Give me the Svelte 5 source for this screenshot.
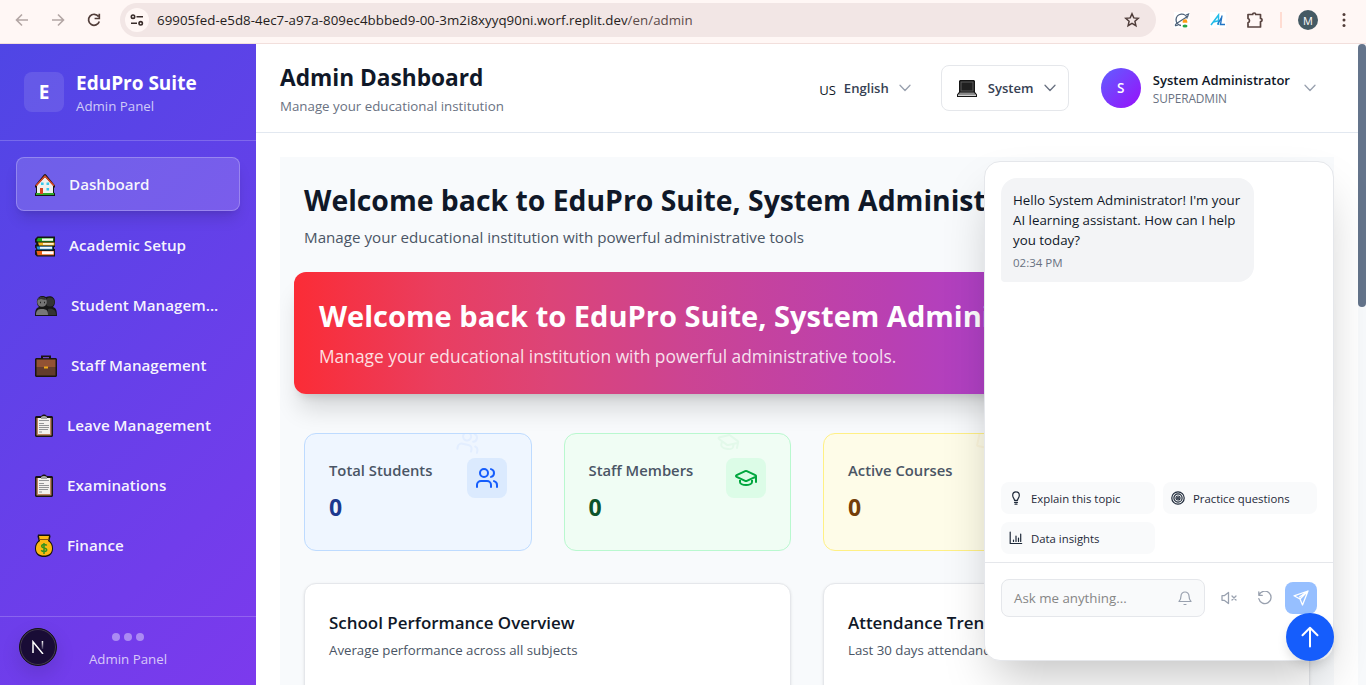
<script>
  const nav = [
    { label: 'Dashboard', icon: 'house', w: 22, active: true },
    { label: 'Academic Setup', icon: 'books', w: 22 },
    { label: 'Student Managem...', icon: 'people', w: 24 },
    { label: 'Staff Management', icon: 'case', w: 24 },
    { label: 'Leave Management', icon: 'clip', w: 20 },
    { label: 'Examinations', icon: 'clip', w: 20 },
    { label: 'Finance', icon: 'money', w: 20 }
  ];
  const stats = [
    { label: 'Total Students', value: '0', tone: 'blue', icon: 'users' },
    { label: 'Staff Members', value: '0', tone: 'green', icon: 'cap' },
    { label: 'Active Courses', value: '0', tone: 'yellow', icon: 'book' }
  ];
  const charts = [
    { title: 'School Performance Overview', sub: 'Average performance across all subjects' },
    { title: 'Attendance Trends', sub: 'Last 30 days attendance' }
  ];
  const chips = [
    { label: 'Explain this topic', icon: 'bulb' },
    { label: 'Practice questions', icon: 'target' },
    { label: 'Data insights', icon: 'bars' }
  ];
</script>

{#snippet chevron(color)}
  <svg class="chev" width="12" height="8" viewBox="0 0 12 8" fill="none" stroke={color} stroke-width="1.3" stroke-linecap="round" stroke-linejoin="round"><path d="M1 1.2 6 6.5 11 1.2" /></svg>
{/snippet}

{#snippet line(name)}
  <svg viewBox="0 0 24 24" width="24" height="24" fill="none" stroke="currentColor" stroke-width="2" stroke-linecap="round" stroke-linejoin="round">
    {#if name === 'users'}
      <path d="M16 21v-2a4 4 0 0 0-4-4H6a4 4 0 0 0-4 4v2" /><circle cx="9" cy="7" r="4" /><path d="M22 21v-2a4 4 0 0 0-3-3.87M16 3.13a4 4 0 0 1 0 7.75" />
    {:else if name === 'cap'}
      <path d="M21.42 10.922a1 1 0 0 0-.019-1.838L12.83 5.18a2 2 0 0 0-1.66 0L2.6 9.08a1 1 0 0 0 0 1.832l8.57 3.908a2 2 0 0 0 1.66 0zM22 10v6M6 12.5V16a6 3 0 0 0 12 0v-3.5" />
    {:else}
      <path d="M12 7v14M3 18a1 1 0 0 1-1-1V4a1 1 0 0 1 1-1h5a4 4 0 0 1 4 4 4 4 0 0 1 4-4h5a1 1 0 0 1 1 1v13a1 1 0 0 1-1 1h-6a3 3 0 0 0-3 3 3 3 0 0 0-3-3z" />
    {/if}
  </svg>
{/snippet}

{#snippet emoji(name, w)}
  <svg class="emoji" width={w} height="24" viewBox="0 0 {w} 24">
    {#if name === 'house'}
      <path d="M1 12.500 10 1.500q1-1 2 0L21 12.500v2h-1v5l1 1v2.500H1v-2.500l1-1v-5H1z" fill="#161616" />
      <path d="M3 12.500 11 4l8 8.500V20.500H3z" fill="#f1f0ee" /><path d="M2 12.800 11 3l9 9.800" fill="none" stroke="#de4b28" stroke-width="1.500" />
      <path d="M2 20h18v2H2z" fill="#2faa2a" /><path d="M6 15h3v6H6z" fill="#d8431f" /><path d="M7 9.500h2.600v2.600H7zM12.500 9.500h2.600v2.600h-2.600zM12.500 15h2.600v2.600h-2.600z" fill="#39c8ec" />
    {:else if name === 'books'}
      <path d="M3.500 2.500H21V13h-1v2h1v7.500H3l-2-2v-4l1.500-1.500L1 13.500v-2.500L2.500 10 1 8V5z" fill="#161616" />
      <path d="M4 4h15.500v3.500H3.500l-1-1z" fill="#20a820" /><path d="M8 4.500h11v2.300H8z" fill="#f7f7f3" />
      <path d="M4 8.500h16.500v3H5z" fill="#f2b31a" /><path d="M9 9h10.500v1.800H9z" fill="#fff4ce" />
      <path d="M2.500 12.500h16v3h-15z" fill="#2794dd" /><path d="M6 12.800h12v2H6z" fill="#eef8ff" />
      <path d="M2.500 17h17.500v4.200H3.500z" fill="#e95f16" /><path d="M8 17.300h11.500v3H8z" fill="#fff" />
    {:else if name === 'people'}
      <path d="M8 2c2 0 3 .5 4 1 4-2 9-.5 9 5 0 2-1 4-2 5 3 1 4 3 4 9H1c0-6 1-8 4-9-4-4-2-11 3-11z" fill="#171717" />
      <circle cx="16" cy="8" r="4.500" fill="#343434" /><path d="M14 15c5-1 8 1 8 6h-8z" fill="#343434" />
      <circle cx="8" cy="8" r="4.800" fill="#747474" /><path d="M4 6c1-4 7-4 8 0-3 0-4-1-5-1z" fill="#343434" /><path d="M2 21c0-5 2-6 6-6 5 0 6 2 6 6z" fill="#777" />
      <path d="M6 8.500h1M10 8.500h1" stroke="#222" stroke-width="1.400" />
    {:else if name === 'case'}
      <path d="M7 1.500h10V4h5l1 1v17l-1 1H2l-1-1V5l1-1h5z" fill="#1b1411" /><path d="M9 3h6v1.200H9z" fill="#6e46bb" />
      <path d="M2.500 5.500h19v7.500h-19z" fill="#925234" /><path d="M2.500 13h19v8.500h-19z" fill="#623c2d" /><path d="M10 12.500h4v2h-4z" fill="#efa91a" />
    {:else if name === 'clip'}
      <path d="M2 2h5l2-1.500h2L13 2h5l1 1v19l-1 1H2l-1-1V3z" fill="#191514" /><path d="M2.500 4h15v17.500h-15z" fill="#bc8561" /><path d="M4 4h12v16H4z" fill="#f3f1ee" /><path d="M7 3l2-1h2l2 1v2H7z" fill="#a4a6a3" />
      <path d="M5 6.500h10M5 9.500h5M5 11.500h10M5 13.500h10M5 15.500h9M5 18h3" stroke="#898a8b" stroke-width=".9" />
    {:else if name === 'money'}
      <path d="M4 0.500h12l.5 2-1 4c2 2 3.500 4 3.500 8 0 6-4 8.500-9 8.500s-9-2.500-9-8.500c0-4 1.500-6 3.500-8l-1-4z" fill="#17130c" /><path d="M5 2h10l-1 5c3 2 4 4 4 7.500 0 4.500-3 7-8 7s-8-2.500-8-7C2 11 3 9 6 7z" fill="#fcb813" />
      <path d="M5.500 5.500h9" stroke="#86510b" /><path d="M12.700 11.500c-1-1.500-5-1.500-5 .700s5 1.300 5 3.500-4 2.300-5.500.500M10 9v11" fill="none" stroke="#35911e" stroke-width="1.500" />
    {/if}
  </svg>
{/snippet}

<div class="screen">
  <div class="browser">
    <div class="navs">
      <svg width="14" height="14" viewBox="0 0 14 14" fill="none" stroke="#b3a6a4" stroke-width="1.600"><path d="M13 7H2M7 1.500 1.500 7 7 12.500" /></svg>
      <svg width="14" height="14" viewBox="0 0 14 14" fill="none" stroke="#b3a6a4" stroke-width="1.600"><path d="M1 7h11M7 1.500 12.500 7 7 12.500" /></svg>
      <svg width="14" height="14" viewBox="0 0 14 14" fill="none" stroke="#523e3a" stroke-width="1.700"><path d="M11.500 3.500A5.500 5.500 0 1 0 12.300 8.500M12.300.8v4.700H7.600" /></svg>
    </div>
    <div class="address">
      <span class="tune"><svg width="14" height="12" viewBox="0 0 14 12" fill="none" stroke="#392c2a" stroke-width="1.600"><circle cx="3" cy="2.700" r="1.700" /><circle cx="10.700" cy="9.300" r="1.700" /><path d="M6.500 2.700H13M1 9.300h6" /></svg></span>
      <span class="url">69905fed-e5d8-4ec7-a97a-809ec4bbbed9-00-3m2i8xyyq90ni.worf.replit.dev<i>/en/admin</i></span>
      <svg class="star" width="16" height="16" viewBox="0 0 16 16" fill="none" stroke="#4e3c39" stroke-width="1.500"><path d="m8 1.800 1.800 4.100 4.500.4-3.400 3 1 4.400L8 11.400l-3.900 2.300 1-4.400-3.400-3 4.500-.4z" /></svg>
    </div>
    <div class="exts">
      <svg width="16" height="16" viewBox="0 0 16 16"><path d="M0 0h16v16H0z" fill="#fff" /><path d="M7 13.500A5.700 5.700 0 1 1 13.300 6.500" fill="none" stroke="#4c6078" stroke-width="1.300" /><path d="M2.500 11.500C.5 13.500 1 14.500 4 13M2.500 11.500 13.500 4.500M12 3l2.500-1L13.500 5" fill="none" stroke="#4c6078" stroke-width="1.200" /><path d="M8.700 9.500a2.300 2.300 0 0 1 4.600 0v1.300H8.700z" fill="#ff9c16" /><ellipse cx="11" cy="14" rx="2.500" ry="1.600" fill="#28a646" /></svg>
      <svg width="16" height="16" viewBox="0 0 16 16"><path d="M0 0h16v16H0z" fill="#fff" /><path d="M1 13 8.500 3v10M3.500 10l6-1.500" fill="none" stroke="#23bde9" stroke-width="1.500" /><path d="m12 3.500-1.500 9h4.500M7.500 12.500l4-7" fill="none" stroke="#2375c5" stroke-width="1.400" /></svg>
      <svg width="18" height="18" viewBox="0 0 18 18" fill="none" stroke="#594440" stroke-width="1.700" stroke-linejoin="round"><path d="M2 3.500h4.700a1.500 1.500 0 0 1 3 0h4.800v4a1.500 1.500 0 0 1 0 3.200v5.300H2v-4.200a2.300 2.300 0 0 0 0-4.300z" /></svg>
      <span class="sep"></span>
      <span class="me">M</span>
      <svg width="4" height="16" viewBox="0 0 4 16" fill="#523e3a"><circle cx="2" cy="2.500" r="1.500" /><circle cx="2" cy="8" r="1.500" /><circle cx="2" cy="13.500" r="1.500" /></svg>
    </div>
  </div>

  <div class="app">
    <aside>
      <div class="brand">
        <span class="logo">E</span>
        <div><b>EduPro Suite</b><small>Admin Panel</small></div>
      </div>
      <nav>
        {#each nav as item}
          <a class:active={item.active}>{@render emoji(item.icon, item.w)}<span>{item.label}</span></a>
        {/each}
      </nav>
      <div class="foot"><div class="dots"><i></i><i></i><i></i></div><span>Admin Panel</span></div>
      <span class="next"><svg width="14" height="14" viewBox="0 0 14 14"><defs><linearGradient id="nf" x2="0" y2="1"><stop stop-color="#fff" /><stop offset="1" stop-color="#fff" stop-opacity=".15" /></linearGradient></defs><path d="M2 13V1.800L12 14" fill="none" stroke="#fff" stroke-width="1.500" /><path d="M10.700 1h1.500v8h-1.500z" fill="url(#nf)" /></svg></span>
    </aside>

    <main>
      <header>
        <div class="title"><h1>Admin Dashboard</h1><p>Manage your educational institution</p></div>
        <div class="lang"><em>US</em><span>English</span>{@render chevron('#99a1af')}</div>
        <div class="theme">
          <svg width="22" height="20" viewBox="0 0 22 20"><path d="M4 2h14l1 1v11l2 2.500V19H1v-2.500L3 14V3z" fill="#151515" /><path d="M4.500 3.500h13v10h-13z" fill="#5b5b5b" /><path d="M5.500 4.500h11v8h-11z" fill="#202020" /><path d="M4 14.500h14l1.500 2h-17z" fill="#8a8a8a" /><path d="M2 16.500h18V18H2z" fill="#d0d0d0" /></svg>
          <span>System</span>{@render chevron('#6a7282')}
        </div>
        <div class="user"><span class="avatar">S</span><div><b>System Administrator</b><small>SUPERADMIN</small></div>{@render chevron('#99a1af')}</div>
      </header>

      <section class="page">
        <h2>Welcome back to EduPro Suite, System Administrator!</h2>
        <p class="lead">Manage your educational institution with powerful administrative tools</p>
        <div class="banner">
          <h2>Welcome back to EduPro Suite, System Administrator!</h2>
          <p>Manage your educational institution with powerful administrative tools.</p>
        </div>
        <div class="stats">
          {#each stats as s}
            <article class={s.tone}>
              <span class="ghost">{@render line(s.icon)}</span>
              <div><label>{s.label}</label><strong>{s.value}</strong></div>
              <span class="tile">{@render line(s.icon)}</span>
            </article>
          {/each}
        </div>
        <div class="charts">
          {#each charts as c}
            <article><h3>{c.title}</h3><p>{c.sub}</p></article>
          {/each}
        </div>
      </section>
    </main>
    <div class="track"><span></span></div>
  </div>

  <div class="chat">
    <div class="messages">
      <div class="bubble"><p>Hello System Administrator! I'm your<br />AI learning assistant. How can I help<br />you today?</p><time>02:34 PM</time></div>
      <div class="chips">
        {#each chips as c}
          <span>
            <svg width="14" height="14" viewBox="0 0 14 14" fill="none" stroke="#1e2939" stroke-width="1.200" stroke-linecap="round" stroke-linejoin="round">
              {#if c.icon === 'bulb'}
                <path d="M5.500 9.300C5.500 7.600 3.700 7 3.700 4.200a3.300 3.300 0 0 1 6.600 0c0 2.800-1.800 3.400-1.800 5.100zM5.500 11.300h3M6 13.200h2" />
              {:else if c.icon === 'target'}
                <circle cx="7" cy="7" r="6.200" /><circle cx="7" cy="7" r="4.100" /><circle cx="7" cy="7" r="2" /><circle cx="7" cy="7" r=".5" />
              {:else}
                <path d="M1.200 1v11.500h11.500M4.500 9v1.500M7 5v5.500M9.500 7v3.500M11.700 3v7.500" />
              {/if}
            </svg>{c.label}
          </span>
        {/each}
      </div>
    </div>
    <div class="composer">
      <div class="input"><span>Ask me anything...</span>
        <svg width="14" height="16" viewBox="0 0 14 16" fill="none" stroke="#99a1af" stroke-width="1.200" stroke-linecap="round" stroke-linejoin="round"><path d="M1 11.500h12c-1.500-1.500-2-3-2-5.500a4 4 0 0 0-8 0c0 2.500-.5 4-2 5.500zM6 14.500h2" /></svg>
      </div>
      <svg class="mute" width="16" height="14" viewBox="0 0 16 14" fill="none" stroke="#99a1af" stroke-width="1.300" stroke-linecap="round" stroke-linejoin="round"><path d="M1 4.700h2.200L7.500 1.500v11L3.200 9.300H1zM11 5l4 4M15 5l-4 4" /></svg>
      <svg class="reset" width="14" height="14" viewBox="0 0 14 14" fill="none" stroke="#99a1af" stroke-width="1.300" stroke-linecap="round" stroke-linejoin="round"><path d="M.8.800v3.500h3.500M1 4.300A6.200 6.200 0 1 1 .8 7.700" /></svg>
      <span class="send"><svg width="16" height="16" viewBox="0 0 16 16" fill="none" stroke="#fff" stroke-width="1.300" stroke-linecap="round" stroke-linejoin="round"><path d="M15 1 1 5.800l6 3.200 2.500 6zM15 1 7 9M15 1l-8.500 6" /></svg></span>
    </div>
    <span class="top"><svg width="18" height="22" viewBox="0 0 18 22" fill="none" stroke="#fff" stroke-width="2" stroke-linecap="round" stroke-linejoin="round"><path d="M9 20.500V2M1.500 9.200 9 1.700l7.500 7.500" /></svg></span>
  </div>
</div>

<style>
  :global(body) { background: #fff; overflow: hidden; }
  * { box-sizing: border-box; }
  h1, h2, h3, p { margin: 0; }
  svg { flex: none; display: block; }
  .screen { position: relative; width: 1366px; height: 685px; overflow: hidden; display: flex; flex-direction: column; font-family: "Open Sans", "Noto Sans", sans-serif; color: #101828; white-space: nowrap; }
  .browser { flex: none; height: 44px; background: #fff7f5; border-bottom: 1px solid #f2dfdc; display: flex; padding-top: 3px; }
  .navs { width: 120px; display: flex; gap: 22px; padding: 10px 0 0 15px; }
  .address { width: 1036px; height: 34px; border-radius: 17px; background: #f2e6e5; display: flex; align-items: center; padding: 0 16px 0 5px; }
  .tune { width: 24px; height: 24px; border-radius: 50%; background: #fff7f5; display: grid; place-items: center; margin-right: 8px; }
  .url { flex: 1; font-size: 13.300px; color: #251d1c; letter-spacing: 0.042px; }
  .url i { font-style: normal; color: #5c4b49; }
  .exts { flex: 1; height: 34px; display: flex; align-items: center; padding-left: 18px; }
  .exts svg + svg { margin-left: 20px; }
  .sep { width: 2px; height: 16px; background: #ffdcd2; margin: 0 16px 0 16px; }
  .me { width: 20px; height: 20px; border-radius: 50%; background: #455a64; color: #fff; display: grid; place-items: center; font-size: 11px; margin-right: 24px; }
  .app { flex: 1; display: flex; min-height: 0; }

  aside { position: relative; flex: none; width: 256px; display: flex; flex-direction: column; background: linear-gradient(135deg, #4f46e5, #7c3aed); color: #fff; }
  .brand { height: 97px; border-bottom: 1px solid #ffffff33; padding: 4px 24px 0; display: flex; align-items: center; gap: 12px; }
  .logo { width: 40px; height: 40px; margin-top: -4px; border-radius: 8px; background: #ffffff1c; display: grid; place-items: center; font-weight: 700; font-size: 19px; }
  .brand div { display: flex; flex-direction: column; margin-top: -3px; }
  .brand b { font-size: 19px; line-height: 26px; }
  .brand small { font-size: 13.300px; line-height: 20px; color: #ffffffb8; }
  nav { flex: 1; padding: 16px; display: flex; flex-direction: column; gap: 8px; }
  nav a { height: 52px; padding: 0 18px; display: flex; align-items: center; gap: 13px; font-weight: 600; font-size: 15.200px; color: #fffffff0; }
  nav a.active { height: 54px; padding: 0 17px; border: 1px solid #ffffff40; border-radius: 8px; background: #ffffff26; box-shadow: 0 10px 15px -3px #0000001f, 0 4px 6px -4px #0000001f; }
  .emoji { margin-top: 2px; }
  .foot { height: 69px; border-top: 1px solid #ffffff33; padding-top: 16px; display: flex; flex-direction: column; align-items: center; color: #ffffffb8; font-size: 13.300px; line-height: 20px; }
  .dots { display: flex; gap: 4px; margin-bottom: 8px; }
  .dots i { width: 8px; height: 8px; border-radius: 50%; background: #ffffff66; }
  .next { position: absolute; left: 19px; top: 584px; width: 38px; height: 38px; border-radius: 50%; background: #190c36; border: 1px solid #141414; box-shadow: inset 0 0 0 1px #43394f, 0 8px 20px #0000001f; display: grid; place-items: center; }

  main { flex: 1; min-width: 0; }
  header { height: 89px; border-bottom: 1px solid #e2e8f0; display: flex; align-items: center; padding: 0 42px 0 24px; }
  .title { flex: 1; padding-top: 1px; }
  .title h1 { font-size: 22.700px; line-height: 32px; }
  .title p { font-size: 13.300px; line-height: 20px; color: #6a7282; margin-top: 2px; }
  .lang, .theme { display: flex; align-items: center; color: #364153; font-size: 13.100px; font-weight: 600; }
  .lang em { font-style: normal; font-weight: 400; color: #101828; margin: 3px 8px 0 0; }
  .lang span { margin-right: 10px; }
  .theme { width: 128px; height: 46px; border: 1px solid #e5e7eb; border-radius: 8px; margin: 0 32px 0 30px; padding: 0 14px; }
  .theme span { margin: 0 10px; }
  .user { display: flex; align-items: center; }
  .avatar { width: 40px; height: 40px; border-radius: 50%; background: linear-gradient(135deg, #615fff, #9810fa); color: #fff; font-size: 13.500px; font-weight: 600; display: grid; place-items: center; margin-right: 12px; }
  .user div { display: flex; flex-direction: column; margin-right: 14px; }
  .user b { font-size: 13.050px; line-height: 20px; font-weight: 600; }
  .user small { font-size: 11.900px; line-height: 16px; color: #6a7282; letter-spacing: -0.120px; }

  .page { margin: 24px 24px 0; height: 528px; padding: 24px; background: #f8fafc; }
  .page > h2 { font-size: 28.350px; line-height: 36px; margin-top: 1px; }
  .lead { font-size: 15.170px; line-height: 24px; color: #4a5565; margin-top: 7px; }
  .banner { height: 122px; margin: 23px -10px 39px; border-radius: 12px; padding: 26px 25px; color: #fff; background: linear-gradient(to right, #fb2c36 0%, #e93e60 14%, #dc4478 25%, #cc4492 38%, #b940b2 58%, #ad40c8 69%, #9040e0 100%); box-shadow: 0 20px 25px -5px #00000024, 0 8px 10px -6px #00000024; }
  .banner h2 { font-size: 29.050px; line-height: 37px; }
  .banner p { font-size: 17.370px; line-height: 28px; margin-top: 7px; color: #ffffffd8; }
  .stats { display: grid; grid-template-columns: repeat(4, 1fr); gap: 32px; margin-bottom: 32px; }
  .stats article { position: relative; height: 118px; overflow: hidden; border: 1px solid; border-radius: 12px; padding: 24px; display: flex; justify-content: space-between; }
  .stats label { display: block; color: #4a5565; font-weight: 600; font-size: 14.800px; line-height: 24px; }
  .stats strong { display: block; font-size: 23px; line-height: 32px; margin-top: 9px; }
  .tile { width: 40px; height: 40px; border-radius: 8px; display: grid; place-items: center; }
  .ghost { position: absolute; right: 50px; top: -4px; opacity: .05; transform: rotate(12deg); }
  .blue { background: #eff6ff; border-color: #bedbff !important; }
  .blue .tile, .blue .ghost { color: #155dfc; } .blue .tile { background: #dbeafe; } .blue strong { color: #1c398e; }
  .green { background: #f0fdf4; border-color: #b9f8cf !important; }
  .green .tile, .green .ghost { color: #00a63e; } .green .tile { background: #dcfce7; } .green strong { color: #0d542b; }
  .yellow { background: #fefce8; border-color: #fff085 !important; }
  .yellow .tile, .yellow .ghost { color: #d08700; } .yellow strong { color: #733e0a; }
  .charts { display: grid; grid-template-columns: 1fr 1fr; gap: 32px; }
  .charts article { height: 300px; background: #fff; border: 1px solid #e5e7eb; border-radius: 12px; box-shadow: 0 1px 3px #0000001a; padding: 25px 24px; }
  .charts h3 { font-size: 16.950px; line-height: 28px; font-weight: 600; }
  .charts p { font-size: 13.250px; line-height: 20px; margin-top: 3px; color: #4a5565; }
  .track { flex: none; width: 8px; background: #f8fafc; }
  .track span { display: block; height: 263px; border-radius: 4px; background: #64748b; }

  .chat { position: absolute; left: 984px; top: 161px; width: 350px; height: 500px; background: #fff; border: 1px solid #e5e7eb; border-radius: 16px; box-shadow: 0 25px 50px -12px #00000040; display: flex; flex-direction: column; }
  .messages { height: 400px; padding: 16px 16px 8px; display: flex; flex-direction: column; justify-content: space-between; }
  .bubble { width: 253px; height: 104px; padding: 12px; border-radius: 16px 16px 16px 4px; background: #f3f4f6; }
  .bubble p { font-size: 13.300px; line-height: 20px; }
  .bubble time { display: block; font-size: 11.500px; line-height: 16px; margin-top: 5px; color: #6a7282; }
  .chips { display: grid; grid-template-columns: 1fr 1fr; gap: 8px; }
  .chips span { height: 32px; border-radius: 8px; background: #f9fafb; display: flex; align-items: center; gap: 8px; padding-left: 8px; font-size: 11.350px; color: #1e2939; }
  .composer { border-top: 1px solid #e5e7eb; padding: 16px; height: 98px; display: flex; align-items: flex-start; }
  .input { width: 204px; height: 38px; border: 1px solid #e5e7eb; border-radius: 8px; background: #f9fafb; color: #868686; font-size: 13.300px; display: flex; align-items: center; justify-content: space-between; padding: 0 12px; }
  .mute { margin: 12px 0 0 16px; }
  .reset { margin: 12px 0 0 21px; }
  .send { width: 32px; height: 32px; margin: 3px 0 0 13px; border-radius: 8px; background: #96bfff; display: grid; place-items: center; }
  .top { position: absolute; left: 301px; top: 451px; width: 48px; height: 48px; border-radius: 50%; background: #155dfc; display: grid; place-items: center; box-shadow: 0 6px 12px -2px #00000026; }
</style>
